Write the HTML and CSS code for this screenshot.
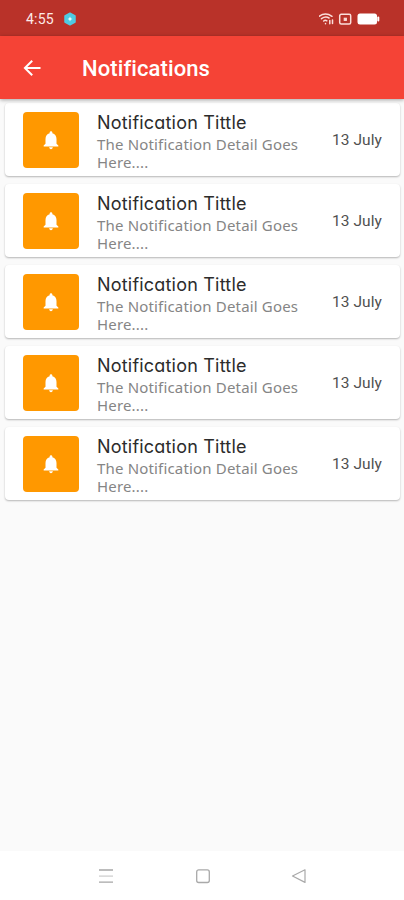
FILE: index.html
```html
<!DOCTYPE html>
<html lang="en">
<head>
<meta charset="utf-8">
<title>Notifications</title>
<link rel="stylesheet" href="styles.css">
</head>
<body>
<svg class="defs" width="0" height="0" aria-hidden="true">
  <symbol id="bell" viewBox="0 0 24 24"><path fill="#fff" d="M12 22c1.1 0 2-.9 2-2h-4c0 1.1.9 2 2 2zm6-6v-5c0-3.07-1.64-5.64-4.5-6.32V4c0-.83-.67-1.5-1.500-1.500s-1.500.67-1.500 1.500v.68C7.630 5.360 6 7.920 6 11v5l-2 2v1h16v-1l-2-2z"/></symbol>
</svg>
<div class="status">
  <span class="time">4:55</span>
  <svg class="hex" width="14" height="14" viewBox="0 0 14 14"><path d="M7 1.200 12 4v6L7 12.800 2 10V4z" fill="#4fcbe2" stroke="#4fcbe2" stroke-width="1.500" stroke-linejoin="round"/><path d="M7 4.500 7.800 6.200 9.500 7 7.800 7.800 7 9.500 6.200 7.800 4.500 7 6.200 6.200z" fill="#e8ffff"/></svg>
  <svg class="tray" width="62" height="14" viewBox="0 0 62 14" fill="none" stroke="#fbdeda" stroke-width="1.500" stroke-linecap="round">
    <path d="M0 4.300Q6.500-.3 13 4.300M2.500 6.700Q6.500 3.800 10 6M4.700 9Q6.300 7.700 7.800 8.800M6.500 11.500v.2M10.800 11.800V8.500M13.500 8v3.500"/>
    <rect x="20.700" y="2.300" width="11" height="9.800" rx="1.500"/>
    <rect x="25.200" y="6.200" width="2.200" height="2.200" fill="#fbdeda" stroke-width="1"/>
    <rect x="38.500" y="1.500" width="19.500" height="11" rx="2.500" fill="#fff" stroke="none"/>
    <path d="M59.300 5.500v3" stroke="#fff" stroke-width="2"/>
  </svg>
</div>
<header class="appbar">
  <svg class="back" width="24" height="24" viewBox="0 0 24 24"><path fill="#fff" d="M20.500 11H7.330l5.590-5.590L11.500 4l-8 8 8 8 1.410-1.410L7.330 13H20.500v-2z"/></svg>
  <h1>Notifications</h1>
</header>
<main class="list">
  <article class="card"><div class="thumb"><svg width="22" height="22"><use href="#bell"/></svg></div><div class="body"><h2>Notification Tittle</h2><p>The Notification Detail Goes<br>Here....</p></div><time>13 July</time></article>
  <article class="card"><div class="thumb"><svg width="22" height="22"><use href="#bell"/></svg></div><div class="body"><h2>Notification Tittle</h2><p>The Notification Detail Goes<br>Here....</p></div><time>13 July</time></article>
  <article class="card"><div class="thumb"><svg width="22" height="22"><use href="#bell"/></svg></div><div class="body"><h2>Notification Tittle</h2><p>The Notification Detail Goes<br>Here....</p></div><time>13 July</time></article>
  <article class="card"><div class="thumb"><svg width="22" height="22"><use href="#bell"/></svg></div><div class="body"><h2>Notification Tittle</h2><p>The Notification Detail Goes<br>Here....</p></div><time>13 July</time></article>
  <article class="card"><div class="thumb"><svg width="22" height="22"><use href="#bell"/></svg></div><div class="body"><h2>Notification Tittle</h2><p>The Notification Detail Goes<br>Here....</p></div><time>13 July</time></article>
</main>
<nav class="nav">
  <svg width="16" height="16" viewBox="0 0 16 16" fill="none" stroke-width="1.300"><path d="M1 2h14M1 14.200h14" stroke="#a6a6a6"/><path d="M1 8.100h14" stroke="#cfcfcf"/></svg>
  <svg width="16" height="16" viewBox="0 0 16 16" fill="none" stroke="#a9a9a9" stroke-width="1.300"><rect x="1.700" y="1.900" width="12.600" height="12.600" rx="2"/></svg>
  <svg width="16" height="16" viewBox="0 0 16 16" fill="none" stroke="#a9a9a9" stroke-width="1.200" stroke-linejoin="round"><path d="M1.500 8 14 1.800v12.600z"/></svg>
</nav>
</body>
</html>
```
FILE: styles.css
```css
* { box-sizing: border-box; }
body {
  margin: 0;
  height: 900px;
  display: flex;
  flex-direction: column;
  overflow: hidden;
  background: #fafafa;
  font-family: Roboto, sans-serif;
}
.defs { position: absolute; }
.status {
  height: 36px;
  flex: none;
  display: flex;
  align-items: center;
  padding: 1px 23px 0 26px;
  background: #b93229;
}
.time { color: #fdeae8; font-size: 14px; width: 37px; letter-spacing: .2px; }
.tray { margin-left: auto; }
.appbar {
  position: relative;
  height: 63px;
  flex: none;
  display: flex;
  align-items: center;
  padding: 1px 20px 0;
  background: #f54336;
  box-shadow: 0 1px 4px rgba(0, 0, 0, .35);
}
.appbar h1 {
  margin: 0 0 0 38px;
  color: #fff;
  font-size: 22px;
  font-weight: 500;
  letter-spacing: .1px;
}
.list {
  flex: 1;
  display: flex;
  flex-direction: column;
  gap: 8px;
  padding: 4px 4px 0 5px;
}
.card {
  height: 73px;
  flex: none;
  display: flex;
  padding: 9px 18px 0;
  background: #fff;
  border-radius: 4px;
  box-shadow: 0 1px 2px rgba(0, 0, 0, .28);
}
.thumb {
  width: 56px;
  height: 56px;
  display: flex;
  align-items: center;
  justify-content: center;
  border-radius: 4px;
  background: #ff9800;
}
.body { flex: 1; margin-left: 18px; white-space: nowrap; }
.body h2 {
  margin: 0;
  color: #2c2c2c;
  font: 400 18px/21px Inter, sans-serif;
  font-feature-settings: "cv11";
  letter-spacing: .2px;
}
.body p {
  margin: 2px 0 0;
  color: #858585;
  font: 400 15px/18px "Noto Sans", sans-serif;
  letter-spacing: .17px;
}
.card time { margin-top: 18px; color: #505050; font-size: 15.500px; line-height: 20px; letter-spacing: .08px; white-space: nowrap; }
.nav {
  height: 49px;
  flex: none;
  display: flex;
  align-items: center;
  justify-content: space-between;
  padding: 1px 97px 0 98px;
  background: #fff;
}
```
